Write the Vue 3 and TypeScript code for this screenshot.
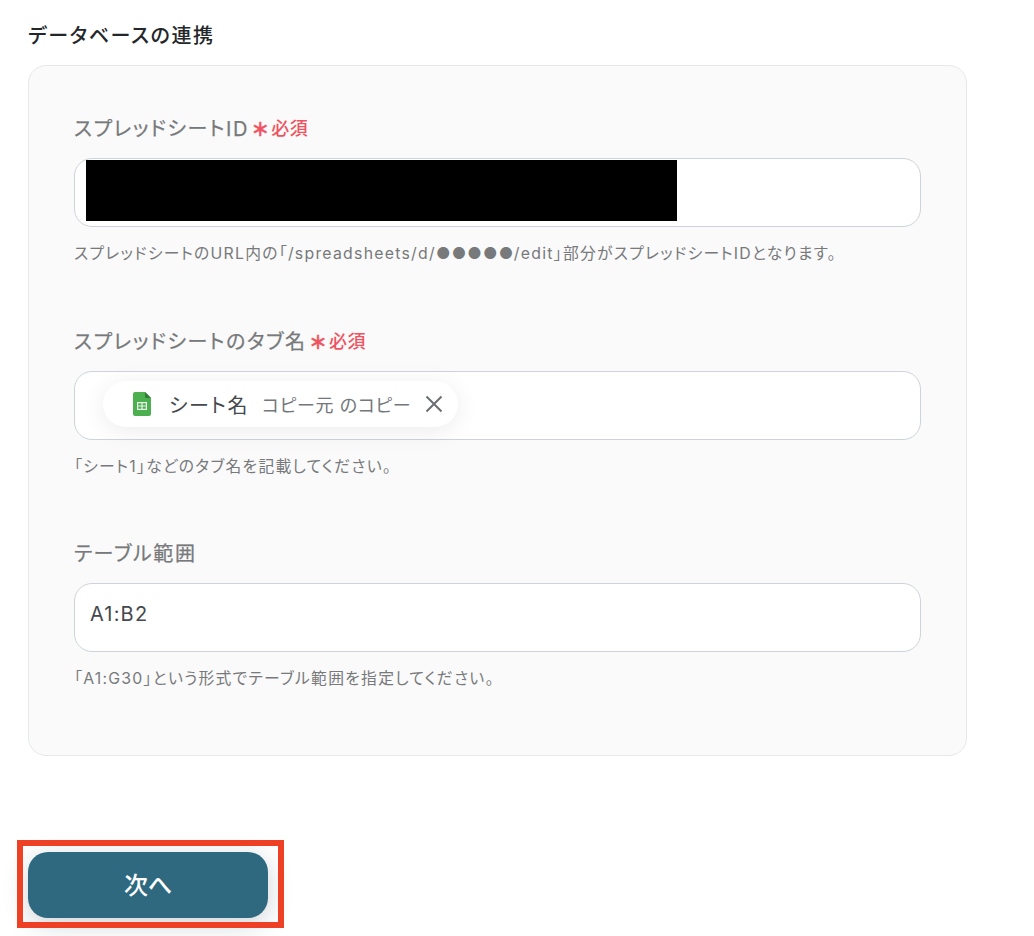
<script setup lang="ts">
const dots = '●●●●●'
</script>

<template>
  <main class="page">
    <h1 class="title">データベースの連携</h1>
    <section class="card">
      <div class="field first">
        <label class="label">スプレッドシートID<span class="req"><span class="ast">＊</span>必須</span></label>
        <div class="input"><div class="mask"></div></div>
        <p class="hint">スプレッドシートのURL内の「/spreadsheets/d/<span class="dots">{{ dots }}</span>/edit」部分がスプレッドシートIDとなります。</p>
      </div>
      <div class="field second">
        <label class="label">スプレッドシートのタブ名<span class="req"><span class="ast">＊</span>必須</span></label>
        <div class="input chip-input">
          <div class="chip">
            <svg class="sheet" width="18" height="24" viewBox="0 0 18 24">
              <path d="M2 0h10l6 6v16a2 2 0 0 1-2 2H2a2 2 0 0 1-2-2V2a2 2 0 0 1 2-2z" fill="#4caf50" />
              <path d="M12 0l6 6h-4.500a1.500 1.500 0 0 1-1.500-1.500z" fill="#2e7d32" />
              <path d="M4 10h10v8H4z M5.200 11.200v2.200h3.200v-2.200z M9.600 11.200v2.200h3.200v-2.200z M5.200 14.600v2.200h3.200v-2.200z M9.600 14.600v2.200h3.200v-2.200z" fill="#e8f5e9" fill-rule="evenodd" />
            </svg>
            <span class="chip-name">シート名</span>
            <span class="chip-sub">コピー元 のコピー</span>
            <svg class="close" width="18" height="18" viewBox="0 0 18 18">
              <path d="M1.500 1.500l15 15M16.500 1.500l-15 15" stroke="#6b6f73" stroke-width="2" fill="none" />
            </svg>
          </div>
        </div>
        <p class="hint">「シート1」などのタブ名を記載してください。</p>
      </div>
      <div class="field third">
        <label class="label">テーブル範囲</label>
        <div class="input value">A1:B2</div>
        <p class="hint">「A1:G30」という形式でテーブル範囲を指定してください。</p>
      </div>
    </section>
    <div class="action">
      <button class="next" type="button">次へ</button>
      <div class="frame"></div>
    </div>
  </main>
</template>

<style scoped>
.page {
  width: 1034px;
  height: 936px;
  box-sizing: border-box;
  padding: 23px 67px 0 28px;
  font-family: Inter, "Noto Sans CJK JP", sans-serif;
  font-feature-settings: "palt";
  overflow: hidden;
}
.title {
  margin: 0;
  font-size: 20px;
  line-height: 26px;
  font-weight: 500;
  letter-spacing: 0.08em;
  color: #24272a;
}
.card {
  margin-top: 16px;
  height: 691px;
  box-sizing: border-box;
  padding: 0 45px;
  background: #fafafa;
  border: 1px solid #e6e8ea;
  border-radius: 18px;
}
.field.first { padding-top: 48px; }
.field.second { padding-top: 63px; }
.field.third { padding-top: 62px; }
.label {
  display: flex;
  align-items: center;
  height: 26px;
  font-size: 20px;
  font-weight: 400;
  letter-spacing: 0.08em;
  color: #77797b;
  -webkit-text-stroke: 0.25px #77797b;
}
.req {
  display: inline-flex;
  align-items: center;
  margin-left: 4px;
  font-size: 18px;
  font-weight: 500;
  letter-spacing: 0.03em;
  color: #ef5361;
  -webkit-text-stroke: 0;
}
.ast {
  font-size: 18px;
  font-weight: 700;
  line-height: 26px;
  height: 26px;
  margin-right: 3px;
  transform: translateY(3px);
  -webkit-text-stroke: 0.6px #ef5361;
}
.input {
  margin-top: 18px;
  height: 69px;
  box-sizing: border-box;
  background: #fff;
  border: 1px solid #ced3da;
  border-radius: 18px;
}
.mask {
  width: 591px;
  height: 61px;
  margin: 1px 0 0 11px;
  background: #000;
}
.chip-input {
  padding: 9px 0 0 28px;
}
.chip {
  display: inline-flex;
  align-items: center;
  width: 355px;
  height: 46px;
  box-sizing: border-box;
  padding: 0 15px 0 30px;
  background: #fff;
  border-radius: 23px;
  box-shadow: 0 4px 24px rgba(0, 0, 0, 0.08);
}
.sheet { flex: none; }
.chip-name {
  margin-left: 18px;
  font-size: 20px;
  letter-spacing: 0.08em;
  color: #45494e;
  white-space: nowrap;
}
.chip-sub {
  margin-left: 13px;
  font-size: 18px;
  letter-spacing: 0.035em;
  color: #73777b;
  white-space: nowrap;
}
.close { margin-left: auto; flex: none; }
.value {
  padding: 15px 15px;
  font-size: 20px;
  line-height: 30px;
  letter-spacing: 0.06em;
  color: #45494e;
}
.hint {
  margin: 17px 0 0;
  font-size: 15.8px;
  line-height: 20px;
  letter-spacing: 0.08em;
  color: #77797b;
  white-space: nowrap;
}
.dots { color: #77797b; }
.action {
  position: relative;
  margin-top: 96px;
  width: 240px;
}
.next {
  display: block;
  width: 240px;
  height: 66px;
  padding: 0 0 4px;
  border: 0;
  border-radius: 20px;
  background: #2e6980;
  color: #fff;
  font: 500 24px Inter, "Noto Sans CJK JP", sans-serif;
  box-shadow: 0 6px 24px rgba(30, 50, 70, 0.22);
}
.frame {
  position: absolute;
  left: -11px;
  top: -12px;
  width: 267px;
  height: 88px;
  box-sizing: border-box;
  border: 6px solid #ee4024;
}
</style>
